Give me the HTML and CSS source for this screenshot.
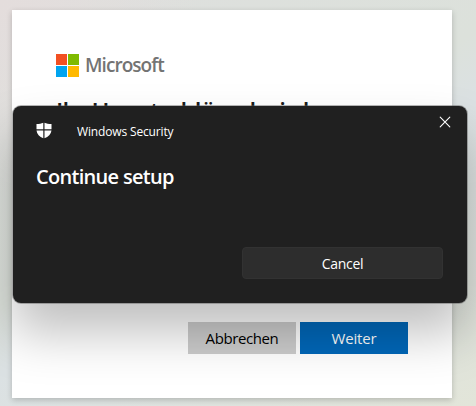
FILE: index.html
```html
<!DOCTYPE html>
<html lang="de">
<head>
    <meta charset="UTF-8">
    <meta name="viewport" content="width=device-width, initial-scale=1.0">
    <title>Microsoft</title>
    <link rel="stylesheet" href="styles.css">
</head>
<body>
    <main class="card">
        <div class="brand">
            <div class="brand-logo">
                <span class="red"></span>
                <span class="green"></span>
                <span class="blue"></span>
                <span class="yellow"></span>
            </div>
            <span class="brand-name">Microsoft</span>
        </div>
        <h1>Ihr Hauptschlüssel wird</h1>
        <div class="actions">
            <button class="btn btn-secondary">Abbrechen</button>
            <button class="btn btn-primary">Weiter</button>
        </div>
    </main>

    <!-- Security prompt over the sign-in card -->
    <div class="dialog" lang="en">
        <div class="dialog-header">
            <svg class="shield" width="16" height="17" viewBox="0 0 16 17">
                <path fill="#fff" d="M7.3 0.7V7.3H0.5V2.1C3.2 2.1 5.5 1.6 7.3 0.7ZM8.5 0.7V7.3H15.5V2.1C12.8 2.1 10.4 1.6 8.5 0.7ZM0.5 8.4H7.3V16.3C3.5 14.8 0.9 12 0.5 8.4ZM8.5 8.4H15.5C15 12 12.4 14.8 8.5 16.3Z"/>
            </svg>
            <span class="dialog-app">Windows Security</span>
            <button class="close" aria-label="Close">
                <svg width="12" height="12" viewBox="0 0 12 12">
                    <path d="M1.2 1.2L10.8 10.8M10.8 1.2L1.2 10.8" stroke="#fff" stroke-width="1.1" stroke-linecap="round"/>
                </svg>
            </button>
        </div>
        <h2>Continue setup</h2>
        <button class="cancel">Cancel</button>
    </div>
</body>
</html>
```
FILE: styles.css
```css
* {
    box-sizing: border-box;
}

body {
    margin: 0;
    padding: 10px 0 0 12px;
    height: 406px;
    overflow: hidden;
    position: relative;
    font-family: "Segoe UI", "Open Sans", "Noto Sans", sans-serif;
    background:
        radial-gradient(circle at 0 0, #e4dddc 0, rgba(228, 221, 220, 0) 200px),
        linear-gradient(150deg, #dedfde 0%, #dce1db 45%, #dbe1e3 55%, #e2e5d9 100%);
}

button {
    border: none;
    padding: 0;
    font-family: inherit;
    cursor: pointer;
}

/* Sign-in card */
.card {
    width: 440px;
    height: 388px;
    padding: 44px;
    display: flex;
    flex-direction: column;
    background: #fff;
    box-shadow: 0 2px 6px rgba(0, 0, 0, 0.2);
}

.brand {
    display: flex;
    align-items: center;
    gap: 6px;
    height: 23px;
}

.brand-logo {
    display: grid;
    grid-template-columns: 11px 11px;
    grid-template-rows: 11px 11px;
    gap: 1px;
}

.red { background: #f25022; }
.green { background: #7fba00; }
.blue { background: #00a4ef; }
.yellow { background: #ffb900; }

.brand-name {
    font-size: 19px;
    font-weight: 600;
    line-height: 23px;
    letter-spacing: -0.95px;
    color: #737373;
}

h1 {
    margin: 18px 0 0;
    font-size: 24px;
    font-weight: 600;
    line-height: 32px;
    letter-spacing: -0.9px;
    white-space: nowrap;
    color: #1b1b1b;
}

.actions {
    display: flex;
    justify-content: flex-end;
    gap: 4px;
    margin-top: auto;
}

.btn {
    width: 108px;
    height: 32px;
    font-size: 15px;
}

.btn-secondary {
    background: #cccccc;
    color: #000;
    letter-spacing: -0.4px;
}

.btn-primary {
    background: #0067b8;
    color: #fff;
    font-weight: 500;
    letter-spacing: -0.2px;
}

/* Windows Security dialog */
.dialog {
    position: absolute;
    top: 106px;
    left: 13px;
    width: 454px;
    height: 197px;
    padding: 16px 24px 24px 23px;
    display: flex;
    flex-direction: column;
    border-radius: 8px;
    background: #202020;
    color: #fff;
    box-shadow: 0 0 0 1px rgba(90, 90, 90, 0.45), 0 30px 50px rgba(0, 0, 0, 0.25);
}

.dialog-header {
    display: flex;
    align-items: center;
    height: 17px;
}

.dialog-app {
    margin: 2px 0 0 25px;
    font-size: 12px;
    line-height: 16px;
    letter-spacing: -0.15px;
}

.close {
    display: flex;
    align-self: flex-start;
    margin: -6px -8px 0 auto;
    background: none;
}

h2 {
    margin: 24px 0 0;
    font-size: 20px;
    font-weight: 600;
    line-height: 28px;
    letter-spacing: -0.7px;
}

.cancel {
    align-self: flex-end;
    width: 201px;
    height: 32px;
    margin-top: auto;
    border: 1px solid #323232;
    border-radius: 4px;
    background: #2d2d2d;
    color: #fff;
    font-size: 14px;
    letter-spacing: -0.3px;
}
```
